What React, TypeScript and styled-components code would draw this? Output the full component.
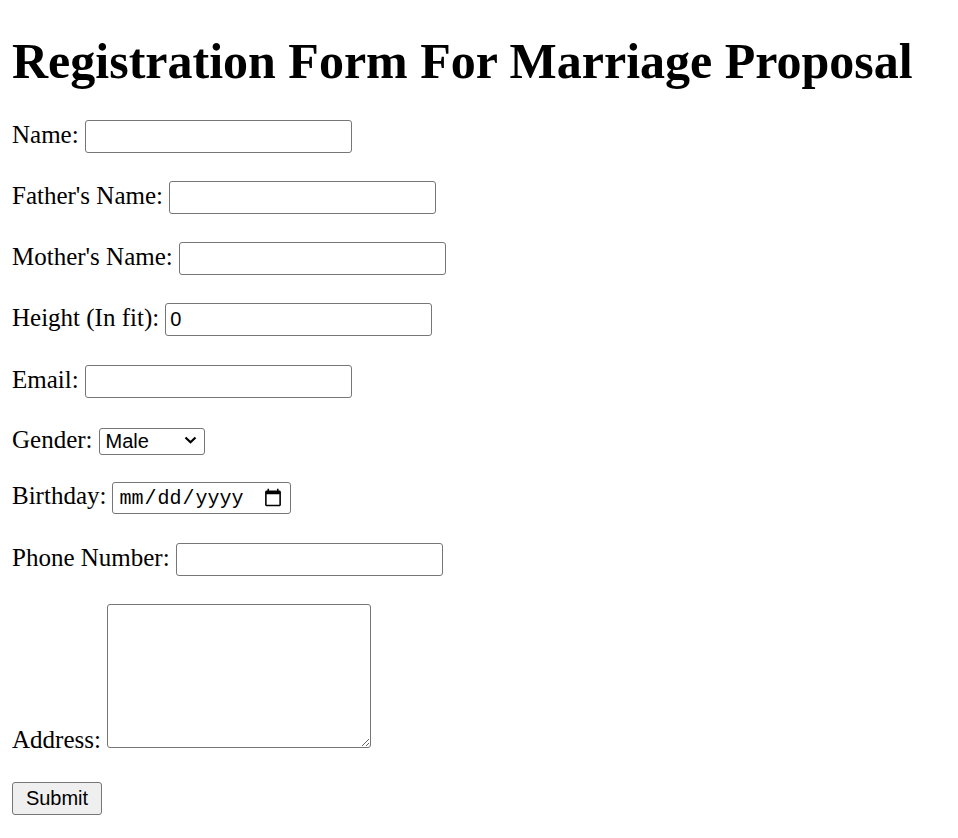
import React from "react";
import styled, { createGlobalStyle } from "styled-components";

const Global = createGlobalStyle`
  html, body { background: #fff; }
  body {
    margin: 12px;
    font-family: "Liberation Serif", "Times New Roman", serif;
    font-size: 25px;
    color: #000;
  }
`;

const Title = styled.h1`
  font-size: 50px;
  font-weight: bold;
  margin: 20px 0 30px;
  line-height: normal;
  white-space: nowrap;
`;

const Form = styled.form`
  margin: 0;
`;

const Row = styled.div<{ $gap?: number }>`
  margin-bottom: ${(p) => p.$gap ?? 28}px;
  line-height: normal;
`;

const Label = styled.label`
  margin-right: 6px;
`;

const TextInput = styled.input`
  box-sizing: border-box;
  width: 267px;
  height: 33px;
  margin: 0;
  padding: 1px 4px;
  border: 1px solid #767676;
  border-radius: 3px;
  background: #fff;
  font-family: "Liberation Sans", Arial, sans-serif;
  font-size: 20px;
  color: #000;
  outline: none;
`;

const DateInput = styled(TextInput)`
  width: 179px;
  height: 32px;
  font-family: "Liberation Mono", "Courier New", monospace;
  font-size: 20px;
  padding: 1px 5px;
`;

const SelectWrap = styled.span`
  position: relative;
  display: inline-block;
`;

const Select = styled.select`
  box-sizing: border-box;
  width: 106px;
  height: 27px;
  margin: 0;
  padding: 0 24px 0 6px;
  border: 1px solid #767676;
  border-radius: 3px;
  background: #fff;
  font-family: "Liberation Sans", Arial, sans-serif;
  font-size: 20px;
  color: #000;
  appearance: none;
  -webkit-appearance: none;
  outline: none;
`;

const Chevron = styled.svg`
  position: absolute;
  right: 8px;
  top: 50%;
  width: 13px;
  height: 8px;
  margin-top: -4px;
  pointer-events: none;
`;

const Area = styled.textarea`
  box-sizing: border-box;
  width: 264px;
  height: 144px;
  margin: 0;
  padding: 3px;
  border: 1px solid #767676;
  border-radius: 3px;
  background: #fff;
  font-family: "Liberation Mono", monospace;
  font-size: 20px;
  vertical-align: baseline;
`;

const Button = styled.button`
  box-sizing: border-box;
  width: 90px;
  height: 33px;
  margin: 0;
  padding: 0 10px;
  border: 1px solid #767676;
  border-radius: 3px;
  background: #efefef;
  font-family: "Liberation Sans", Arial, sans-serif;
  font-size: 20px;
  color: #000;
`;

export default function App() {
  return (
    <>
      <Global />
      <Title>Registration Form For Marriage Proposal</Title>
      <Form onSubmit={(e) => e.preventDefault()}>
        <Row>
          <Label>Name:</Label>
          <TextInput type="text" />
        </Row>
        <Row>
          <Label>Father's Name:</Label>
          <TextInput type="text" />
        </Row>
        <Row>
          <Label>Mother's Name:</Label>
          <TextInput type="text" />
        </Row>
        <Row $gap={29}>
          <Label>Height (In fit):</Label>
          <TextInput type="text" defaultValue="0" />
        </Row>
        <Row>
          <Label>Email:</Label>
          <TextInput type="text" />
        </Row>
        <Row $gap={27}>
          <Label>Gender:</Label>
          <SelectWrap>
            <Select defaultValue="Male">
              <option>Male</option>
              <option>Female</option>
            </Select>
            <Chevron viewBox="0 0 13 8" fill="none">
              <path d="M1.5 1.5 L6.5 6.3 L11.5 1.5" stroke="#000" strokeWidth="2.2" />
            </Chevron>
          </SelectWrap>
        </Row>
        <Row $gap={29}>
          <Label>Birthday:</Label>
          <DateInput type="date" />
        </Row>
        <Row>
          <Label>Phone Number:</Label>
          <TextInput type="text" />
        </Row>
        <Row>
          <Label>Address:</Label>
          <Area />
        </Row>
        <Row>
          <Button type="submit">Submit</Button>
        </Row>
      </Form>
    </>
  );
}
